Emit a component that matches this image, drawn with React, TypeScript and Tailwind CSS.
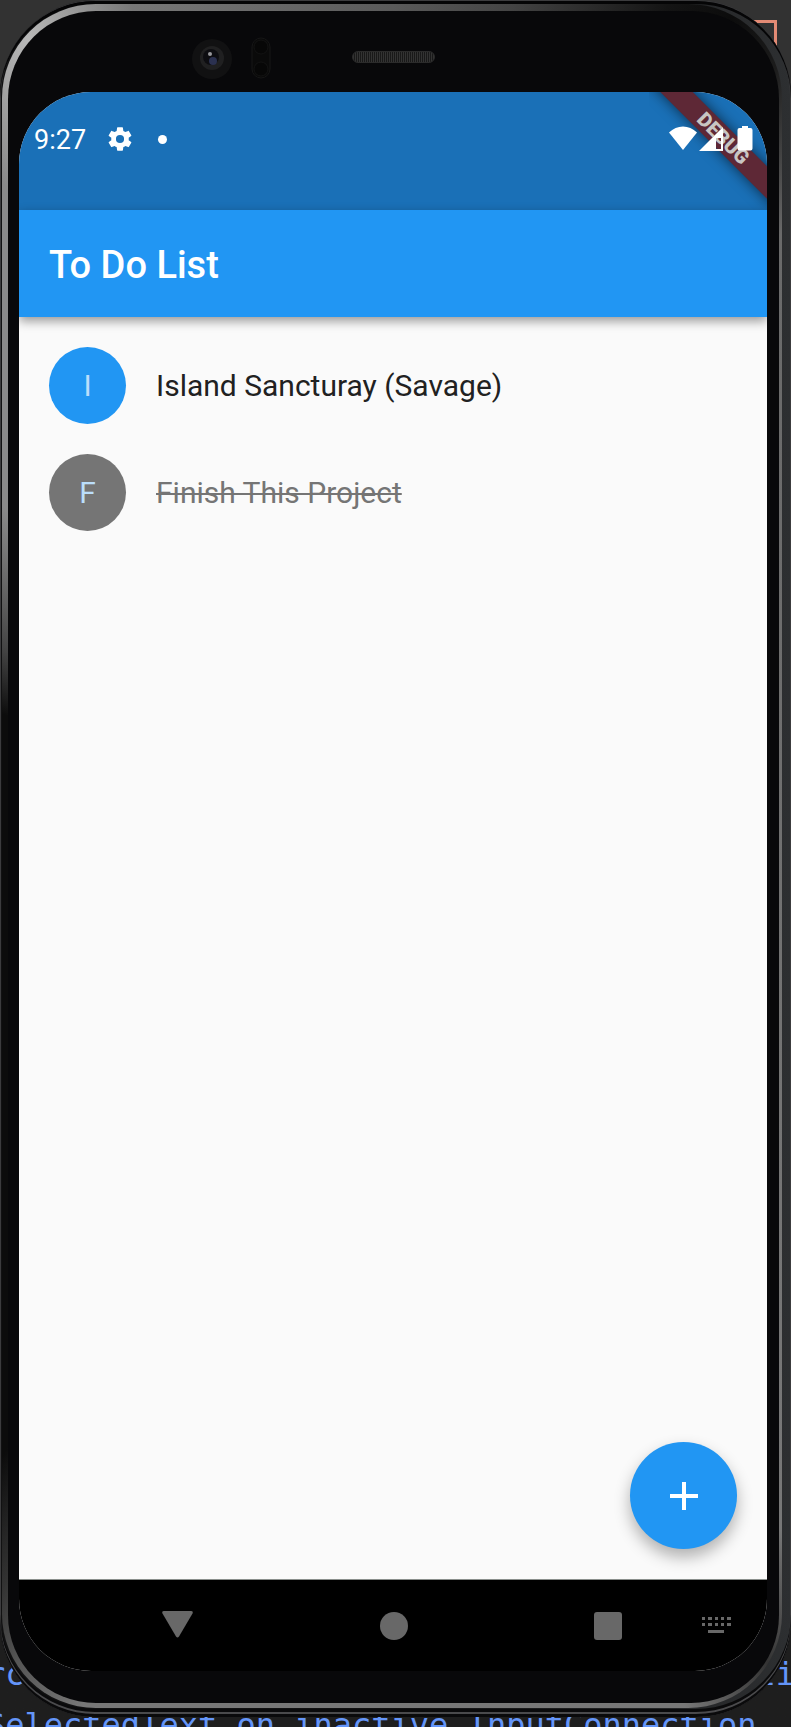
import React from "react";

type Todo = { name: string; done: boolean };

const todos: Todo[] = [
  { name: "Island Sancturay (Savage)", done: false },
  { name: "Finish This Project", done: true },
];

function Backdrop() {
  return (
    <div
      aria-hidden="true"
      className="absolute inset-0 overflow-hidden bg-linear-to-b from-[#323232] from-50% to-[#1e1e1e] to-50% font-['DejaVu_Sans_Mono',monospace] text-[32px] leading-[51px] whitespace-pre text-[#6495f8]"
    >
      <div className="absolute top-5 right-[14px] h-8 w-8 border-[3px] border-[#e38b75]" />
      <div className="absolute inset-x-0 -bottom-6 -mr-1 -ml-[14px]">
        <div className="flex justify-between">
          <span>rc</span>
          <span>ti</span>
        </div>
        <div>SelectedText on inactive InputConnection</div>
      </div>
    </div>
  );
}

function Earpiece() {
  return (
    <div className="relative h-[81px]" aria-hidden="true">
      <svg className="absolute top-[26px] left-[173px]" width="80" height="44" viewBox="0 0 80 44">
        <circle cx="20" cy="22" r="20" fill="#111112" />
        <circle cx="20" cy="21" r="12" fill="#202021" />
        <circle cx="19" cy="20" r="8" fill="#0d0d11" />
        <circle cx="21" cy="24" r="4" fill="#2b3150" />
        <circle cx="18" cy="17" r="2" fill="#98989c" />
        <rect x="60" y="1" width="18" height="40" rx="9" fill="#0a0a0a" stroke="#161616" />
        <circle cx="69" cy="10" r="7" fill="#070707" stroke="#131313" />
        <circle cx="69" cy="32" r="7" fill="#070707" stroke="#131313" />
      </svg>
      <div className="mx-auto h-full w-[83px] pt-10">
        <div className="h-3 rounded-full border border-[#2b2b2b] bg-[repeating-linear-gradient(90deg,#333_0_1px,#191919_1px_2px)]" />
      </div>
    </div>
  );
}

function StatusBar() {
  return (
    <div className="relative flex h-[118px] items-start bg-[#1a70b7] pt-[31px] pr-[14px] pl-[15px] text-white">
      <div className="flex h-8 flex-1 items-center">
        <span className="w-[72px] pt-[2px] text-[27px] leading-8">9:27</span>
        <svg width="28" height="28" viewBox="0 0 24 24" fill="currentColor" aria-label="Settings">
          <path d="M19.430 12.980c.04-.32.07-.64.07-.98s-.03-.66-.07-.98l2.110-1.650c.19-.15.24-.42.12-.64l-2-3.460c-.12-.22-.39-.3-.61-.22l-2.490 1c-.52-.4-1.080-.73-1.690-.98l-.38-2.650C14.460 2.180 14.250 2 14 2h-4c-.25 0-.46.18-.49.42l-.38 2.650c-.61.25-1.170.59-1.690.98l-2.490-1c-.23-.09-.49 0-.61.22l-2 3.460c-.13.22-.07.49.12.64l2.110 1.650c-.04.32-.07.65-.07.98s.03.66.07.98l-2.110 1.650c-.19.15-.24.42-.12.64l2 3.460c.12.22.39.3.61.22l2.490-1c.52.4 1.080.73 1.690.98l.38 2.650c.03.24.24.42.49.42h4c.25 0 .46-.18.49-.42l.38-2.650c.61-.25 1.170-.59 1.690-.98l2.490 1c.23.09.49 0 .61-.22l2-3.460c.12-.22.07-.49-.12-.64zM12 15.500a3.500 3.500 0 1 1 0-7 3.500 3.500 0 0 1 0 7z" />
        </svg>
        <span className="ml-6 size-[9px] rounded-full bg-white" />
      </div>

      <div className="absolute top-0 right-0 h-[118px] w-[118px] overflow-hidden" aria-hidden="true">
        <div className="absolute top-[35px] -left-9 flex h-[23px] w-[220px] rotate-45 items-center justify-center bg-[#5e2836] text-[20px] leading-[23px] font-black text-[#c8c5c3] shadow-[0_0_14px_rgba(0,0,0,0.6)]">
          DEBUG
        </div>
      </div>

      <svg className="relative" width="84" height="32" viewBox="0 0 84 32" fill="currentColor" aria-label="Wi-Fi, signal, battery">
        <path d="M0 9.500C8 1.500 20 1.500 28 9.500L14 27z" />
        <path fillRule="evenodd" d="M30 28L54 4V28zM47 15V26H52V15z" />
        <path d="M73 3h6v2h2.500a2 2 0 0 1 2 2v18.500a2 2 0 0 1-2 2h-11a2 2 0 0 1-2-2V7a2 2 0 0 1 2-2H73z" />
      </svg>
    </div>
  );
}

function TodoRow({ todo }: { todo: Todo }) {
  return (
    <li className="flex h-[107px] items-center px-[30px]">
      <button type="button" className="flex items-center gap-[30px] text-left">
        <span
          aria-hidden="true"
          className={
            todo.done
              ? "flex size-[77px] items-center justify-center rounded-full bg-[#757575] text-[#bbdefb]"
              : "flex size-[77px] items-center justify-center rounded-full bg-[#2196f3] text-[#bbdefb]"
          }
        >
          {todo.name[0]}
        </span>
        <span
          className={
            todo.done
              ? "text-[#757575] line-through decoration-[#757575] decoration-2"
              : "text-[#212121]"
          }
        >
          {todo.name}
        </span>
      </button>
    </li>
  );
}

function NavBar() {
  return (
    <nav className="flex h-[92px] items-center border-t border-[#8a8f8c] bg-black pr-9 pl-[143px] text-[#686868]">
      <div className="flex flex-1 items-center justify-between">
        <button type="button" aria-label="Back">
          <svg width="31" height="32" viewBox="0 0 31 32" fill="currentColor">
            <path d="M2 1h27q2.500 0 1.500 2.500L17 26.500q-1.500 2-3 0L.5 3.500Q-.5 1 2 1z" />
          </svg>
        </button>
        <button type="button" aria-label="Home" className="size-7 rounded-full bg-[#686868]" />
        <button type="button" aria-label="Recent apps" className="size-7 rounded-[3px] bg-[#686868]" />
      </div>
      <button type="button" aria-label="Keyboard" className="ml-20">
        <svg width="29" height="17" viewBox="0 0 29 17" fill="currentColor">
          <path d="M0 0h3v3H0zM6 0h4v3H6zM13 0h3v3h-3zM19 0h3v3h-3zM25 0h4v3h-4zM0 6h3v3H0zM6 6h4v3H6zM13 6h3v3h-3zM19 6h3v3h-3zM25 6h4v3h-4zM6 13h16v3H6z" />
        </svg>
      </button>
    </nav>
  );
}

export default function App() {
  return (
    <div className="relative flex min-h-screen flex-col overflow-hidden pb-[10px] font-[Roboto,sans-serif]">
      <Backdrop />
      <div className="relative flex flex-1 flex-col rounded-[96px] bg-linear-to-r from-[#111112] from-50% to-[#2d2f31] pt-px shadow-[inset_0_0_0_1px_#3c3c3e]">
        <div className="flex flex-1 flex-col rounded-[95px] pt-[3px] pr-[9px] pb-[9px] pl-[2px] shadow-[inset_0_-3px_0_0_#0a0a0b,inset_0_-5px_0_0_#4a4a4c,inset_0_-8px_0_0_#0a0a0b,inset_0_3px_0_0_#050506]">
          <div className="flex flex-1 flex-col rounded-[94px] bg-[conic-gradient(#5a5a5a_0deg,#444_8deg,#141414_18deg,#0c0c0c_22deg,#1c1c1c_26deg,#6a6a6a_32deg,#777_150deg,#333_155deg,#777_161deg,#777_200deg,#555_205deg,#333_208deg,#0c0c0c_213deg,#0c0c0c_290deg,#444_298deg,#8a8a8a_312deg,#8a8a8a_330deg,#b8b8b8_336deg,#777_343deg,#5a5a5a_360deg)] pt-[7px] pr-[3px] pb-[5px] pl-[6px]">
            <div className="flex flex-1 flex-col rounded-[88px] bg-[#08080a] pr-3 pb-8 pl-[11px]">
              <Earpiece />
              <div className="flex flex-1 flex-col overflow-hidden rounded-[72px] bg-[#fafafa]">
                <StatusBar />
                <header className="relative flex h-[107px] items-center bg-[#2196f3] px-[30px] pt-[2px] shadow-[0_4px_10px_rgba(0,0,0,0.4)]">
                  <h1 className="text-[38px] leading-[48px] font-medium text-white">To Do List</h1>
                </header>
                <main className="relative flex flex-1 flex-col justify-between">
                  <ul className="pt-[15px] text-[30px] leading-10">
                    {todos.map((todo) => (
                      <TodoRow key={todo.name} todo={todo} />
                    ))}
                  </ul>
                  <button
                    type="button"
                    aria-label="Add item"
                    className="mr-[30px] mb-[30px] flex size-[107px] items-center justify-center self-end rounded-full bg-[#2196f3] text-white shadow-[0_8px_16px_rgba(0,0,0,0.3)]"
                  >
                    <svg width="28" height="28" viewBox="0 0 28 28" fill="currentColor">
                      <path d="M12 0h4v12h12v4H16v12h-4V16H0v-4h12z" />
                    </svg>
                  </button>
                </main>
                <NavBar />
              </div>
            </div>
          </div>
        </div>
      </div>
    </div>
  );
}
